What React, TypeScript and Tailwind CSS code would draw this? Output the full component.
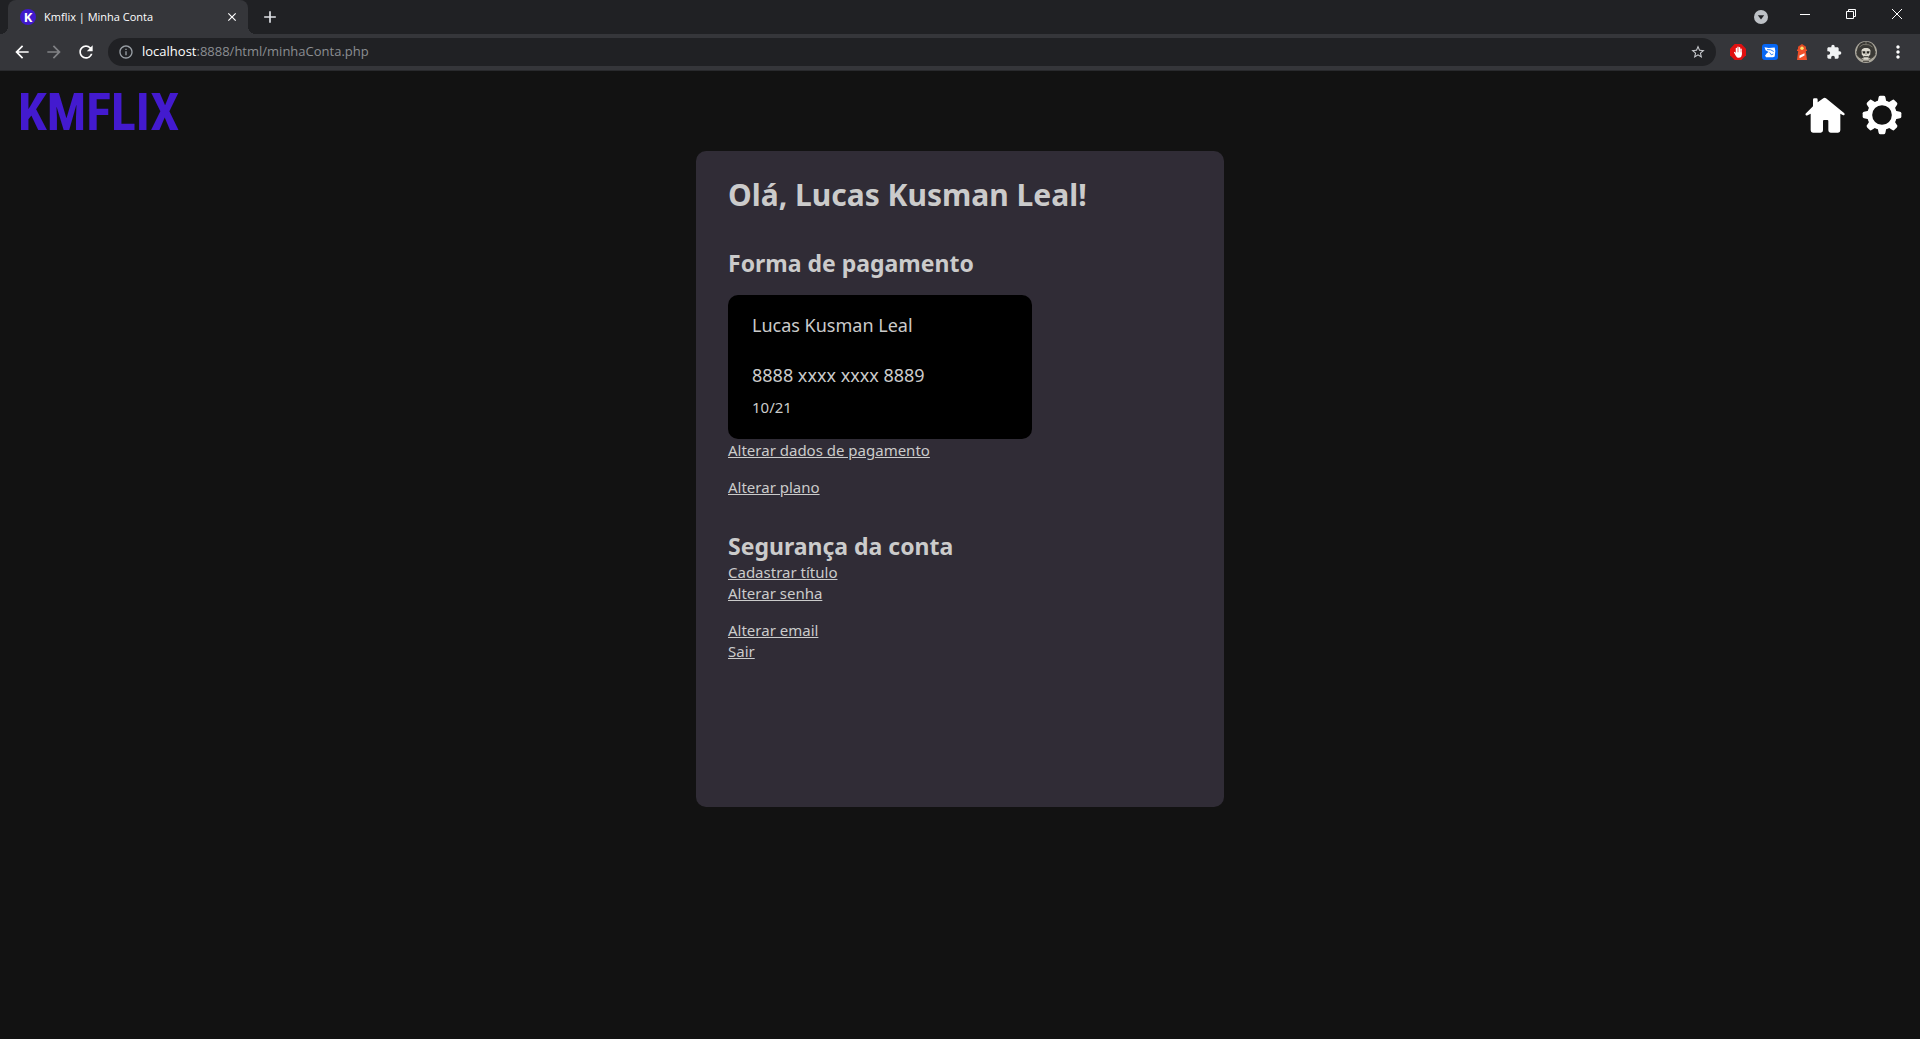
import {
  MdArrowBack,
  MdArrowForward,
  MdRefresh,
  MdInfoOutline,
  MdStarBorder,
  MdExtension,
  MdMoreVert,
  MdClose,
  MdAdd,
} from "react-icons/md";

const UI_FONT = "font-['Noto_Sans','Open_Sans',sans-serif]";

function Favicon() {
  return (
    <span className="flex size-4 shrink-0 items-center justify-center rounded-full bg-[#4019cc] text-[13px] leading-none font-bold text-white">
      K
    </span>
  );
}

function TabStrip() {
  return (
    <div className="flex h-[34px] bg-[#202124] pl-2">
      <div className="relative flex w-60 items-center rounded-t-lg bg-[#35363a] pr-2 pl-3 text-white">
        <span className="absolute bottom-0 -left-2 size-2 bg-[radial-gradient(circle_at_0_0,#202124_8px,#35363a_8px)]" />
        <span className="absolute -right-2 bottom-0 size-2 bg-[radial-gradient(circle_at_100%_0,#202124_8px,#35363a_8px)]" />
        <Favicon />
        <span className="ml-2 flex-1 font-['Open_Sans',sans-serif] text-[11px] whitespace-nowrap">Kmflix | Minha Conta</span>
        <button aria-label="Fechar guia" className="flex size-4 items-center justify-center">
          <MdClose size={14} />
        </button>
      </div>
      <button aria-label="Nova guia" className="ml-3 flex w-5 items-center justify-center text-[#dee1e6]">
        <MdAdd size={20} />
      </button>
      <div className="ml-auto flex items-start text-white">
        <button aria-label="Pesquisar guias" className="mt-[10px] mr-[14px]">
          <svg width="14" height="14" viewBox="0 0 14 14">
            <circle cx="7" cy="7" r="7" fill="#bdc1c6" />
            <path d="M3.8 5.2h6.4L7 9.4z" fill="#202124" />
          </svg>
        </button>
        <button aria-label="Minimizar" className="flex h-7 w-[46px] items-center justify-center">
          <svg width="10" height="10" viewBox="0 0 10 10">
            <path d="M0 5.5h10" stroke="currentColor" />
          </svg>
        </button>
        <button aria-label="Restaurar" className="flex h-7 w-[46px] items-center justify-center">
          <svg width="10" height="10" viewBox="0 0 10 10" fill="none" stroke="currentColor">
            <path d="M.5 2.5h7v7h-7zM2.5 2.5v-2h7v7h-2" />
          </svg>
        </button>
        <button aria-label="Fechar" className="flex h-7 w-[46px] items-center justify-center">
          <svg width="10" height="10" viewBox="0 0 10 10" stroke="currentColor">
            <path d="M0 0l10 10M10 0L0 10" />
          </svg>
        </button>
      </div>
    </div>
  );
}

function Extensions() {
  return (
    <div className="flex items-center gap-4">
      <button aria-label="Bloqueador de anúncios">
        <svg width="16" height="16" viewBox="0 0 16 16">
          <path d="M4.7 0h6.6L16 4.7v6.6L11.3 16H4.7L0 11.3V4.700z" fill="#e01010" />
          <path d="M6.400 4.500v5M8 3.200v6M9.600 3.700v6M11.100 5.200v5M4.600 8.500l1.500 2.500" stroke="#fff" strokeWidth="1.300" strokeLinecap="round" />
          <path d="M5.750 8.300h6v2.200c0 2-1 3.300-2.900 3.300-1.700 0-2.500-.9-3.100-2.300z" fill="#fff" />
        </svg>
      </button>
      <button aria-label="Captura">
        <svg width="16" height="16" viewBox="0 0 16 16">
          <rect width="16" height="16" rx="3" fill="#0667f5" />
          <path d="M2.500 3.300l4.200.7 6-.6.6 3.500-.6 5.600-1.700.8H4.200L3 11.800l1.800-2.600L6.600 8 3.600 6.200z" fill="#fff" />
          <path d="M5 5.600l3.600.2 3.200 1.700M7.600 8.400l1.700 2.400 2-.8" stroke="#0667f5" strokeWidth=".8" fill="none" />
        </svg>
      </button>
      <button aria-label="Lighthouse">
        <svg width="16" height="16" viewBox="0 0 16 16">
          <path d="M8 0l4 2.700v3.600H4V2.700z" fill="#e04a24" />
          <path d="M3 5.500h10v1.400H3zM4.200 6.900h7.600L13 16H3z" fill="#f0502a" />
          <circle cx="8" cy="4.200" r="1.700" fill="#ffe36b" />
          <path d="M5.500 11.400l5-2.200v2.300l-5 2.800z" fill="#fff" />
        </svg>
      </button>
      <button aria-label="Extensões" className="text-[#f1f3f4]">
        <MdExtension size={16} />
      </button>
    </div>
  );
}

function Avatar() {
  return (
    <svg width="22" height="22" viewBox="0 0 22 22">
      <circle cx="11" cy="11" r="11" fill="#aaa79c" />
      <path d="M2 9C3 3 7 .8 11 .8S19 3 20 9l.5 5-4 3h-11l-4-3z" fill="#3a3935" />
      <path d="M4.500 6l3.500-2.500 6 .3L17.500 6M11 1v3" stroke="#77746a" fill="none" />
      <path d="M6.500 9.500C7 7.500 9 7 11 7s4 .5 4.500 2.500l-.3 4.200-1.700 1.500-.3 3.300H8.800l-.3-3.300-1.700-1.500z" fill="#dedbd0" />
      <path d="M7.400 10.200h2.900v2.400H8zM11.700 10.200h2.900l-.6 2.400h-2.300zM10.400 13.500l.6-1 .6 1zM8.800 15.300h4.400v.9H8.800z" fill="#25241f" />
      <path d="M2.500 15l5 3.500M19.500 15l-5 3.500M8 20.300h6M1 11h2M19 11h2" stroke="#45433c" />
    </svg>
  );
}

function Toolbar() {
  return (
    <div className="flex h-[37px] items-center border-b border-[#292a2d] bg-[#35363a] pr-3 pl-3 text-white">
      <div className="flex gap-3">
        <button aria-label="Voltar">
          <MdArrowBack size={20} />
        </button>
        <button aria-label="Avançar" className="text-[#818285]">
          <MdArrowForward size={20} />
        </button>
        <button aria-label="Recarregar">
          <MdRefresh size={20} />
        </button>
      </div>
      <div className="ml-3 flex h-7 flex-1 items-center rounded-full bg-[#202124] pr-[10px] pl-[10px]">
        <MdInfoOutline size={16} className="shrink-0 text-[#9aa0a6]" />
        <a href="#conta" className="ml-2 flex-1 font-['Open_Sans',sans-serif] text-[13px] text-[#8b8e92]">
          <span className="text-white">localhost</span>:8888/html/minhaConta.php
        </a>
        <button aria-label="Adicionar aos favoritos" className="text-[#c8cace]">
          <MdStarBorder size={16} />
        </button>
      </div>
      <div className="ml-[14px] flex items-center">
        <Extensions />
        <button aria-label="Perfil" className="ml-[13px]">
          <Avatar />
        </button>
        <button aria-label="Menu" className="ml-[11px]">
          <MdMoreVert size={20} />
        </button>
      </div>
    </div>
  );
}

function HomeIcon() {
  return (
    <svg width="40" height="36" viewBox="0 0 120 108" fill="#fff">
      <path d="M24 28V8q0-4 4-4h6q4 0 4 4v8L55 4q4-3 8 0l55 45q2 3 0 5t-5 0l-7-4v50q0 7-7 7H77q-7 0-7-7V72q0-3-3-3h-10q-3 0-3 3v28q0 7-7 7H24q-7 0-7-7V50l-9 5q-4 2-6-1t1-5z" />
    </svg>
  );
}

function GearIcon() {
  const angles = [0, 45, 90, 135, 180, 225, 270, 315];
  return (
    <svg width="40" height="40" viewBox="-60 -60 120 120" fill="#fff">
      <circle r="37" fill="none" stroke="#fff" strokeWidth="15" />
      {angles.map((a) => (
        <path key={a} d="M-13-40L-10-54q1-4 5-4H5q4 0 5 4L13-40z" transform={`rotate(${a})`} />
      ))}
    </svg>
  );
}

function SiteHeader() {
  return (
    <header className="flex h-20 items-center justify-between px-[18px]">
      <a href="#inicio" className="mt-1 font-['Roboto_Condensed','Liberation_Sans_Narrow',sans-serif] text-[52px] leading-none font-bold text-[#431acf]">
        KMFLIX
      </a>
      <nav className="mt-2 flex items-center gap-[17px]">
        <a href="#home" aria-label="Início">
          <HomeIcon />
        </a>
        <a href="#config" aria-label="Configurações">
          <GearIcon />
        </a>
      </nav>
    </header>
  );
}

function Links({ items }: { items: string[] }) {
  return (
    <ul>
      {items.map((t) => (
        <li key={t} className="h-[21px]">
          <a href="#conta" className="underline">
            {t}
          </a>
        </li>
      ))}
    </ul>
  );
}

function AccountCard() {
  return (
    <main className="mx-auto min-h-[656px] w-full max-w-[528px] rounded-[10px] bg-[#302c36] px-8 py-6 text-[15px] leading-[21px] text-[#cbcbcb]">
      <h1 className="text-[30px] leading-10 font-bold">Olá, Lucas Kusman Leal!</h1>
      <section className="mt-8">
        <h2 className="text-[23px] leading-8 font-bold">Forma de pagamento</h2>
        <div className="mt-4 h-36 max-w-[304px] rounded-[10px] bg-black px-6 pt-4">
          <p className="text-[18px] leading-7">Lucas Kusman Leal</p>
          <p className="mt-[22px] text-[18px] leading-7">8888 xxxx xxxx 8889</p>
          <p className="mt-2">10/21</p>
        </div>
        <div className="flex flex-col gap-4 pt-px">
          <Links items={["Alterar dados de pagamento"]} />
          <Links items={["Alterar plano"]} />
        </div>
      </section>
      <section className="mt-8">
        <h2 className="text-[23px] leading-8 font-bold">Segurança da conta</h2>
        <div className="flex flex-col gap-4">
          <Links items={["Cadastrar título", "Alterar senha"]} />
          <Links items={["Alterar email", "Sair"]} />
        </div>
      </section>
    </main>
  );
}

export default function App() {
  return (
    <div className={`min-h-screen bg-[#121212] ${UI_FONT}`}>
      <TabStrip />
      <Toolbar />
      <SiteHeader />
      <AccountCard />
    </div>
  );
}
